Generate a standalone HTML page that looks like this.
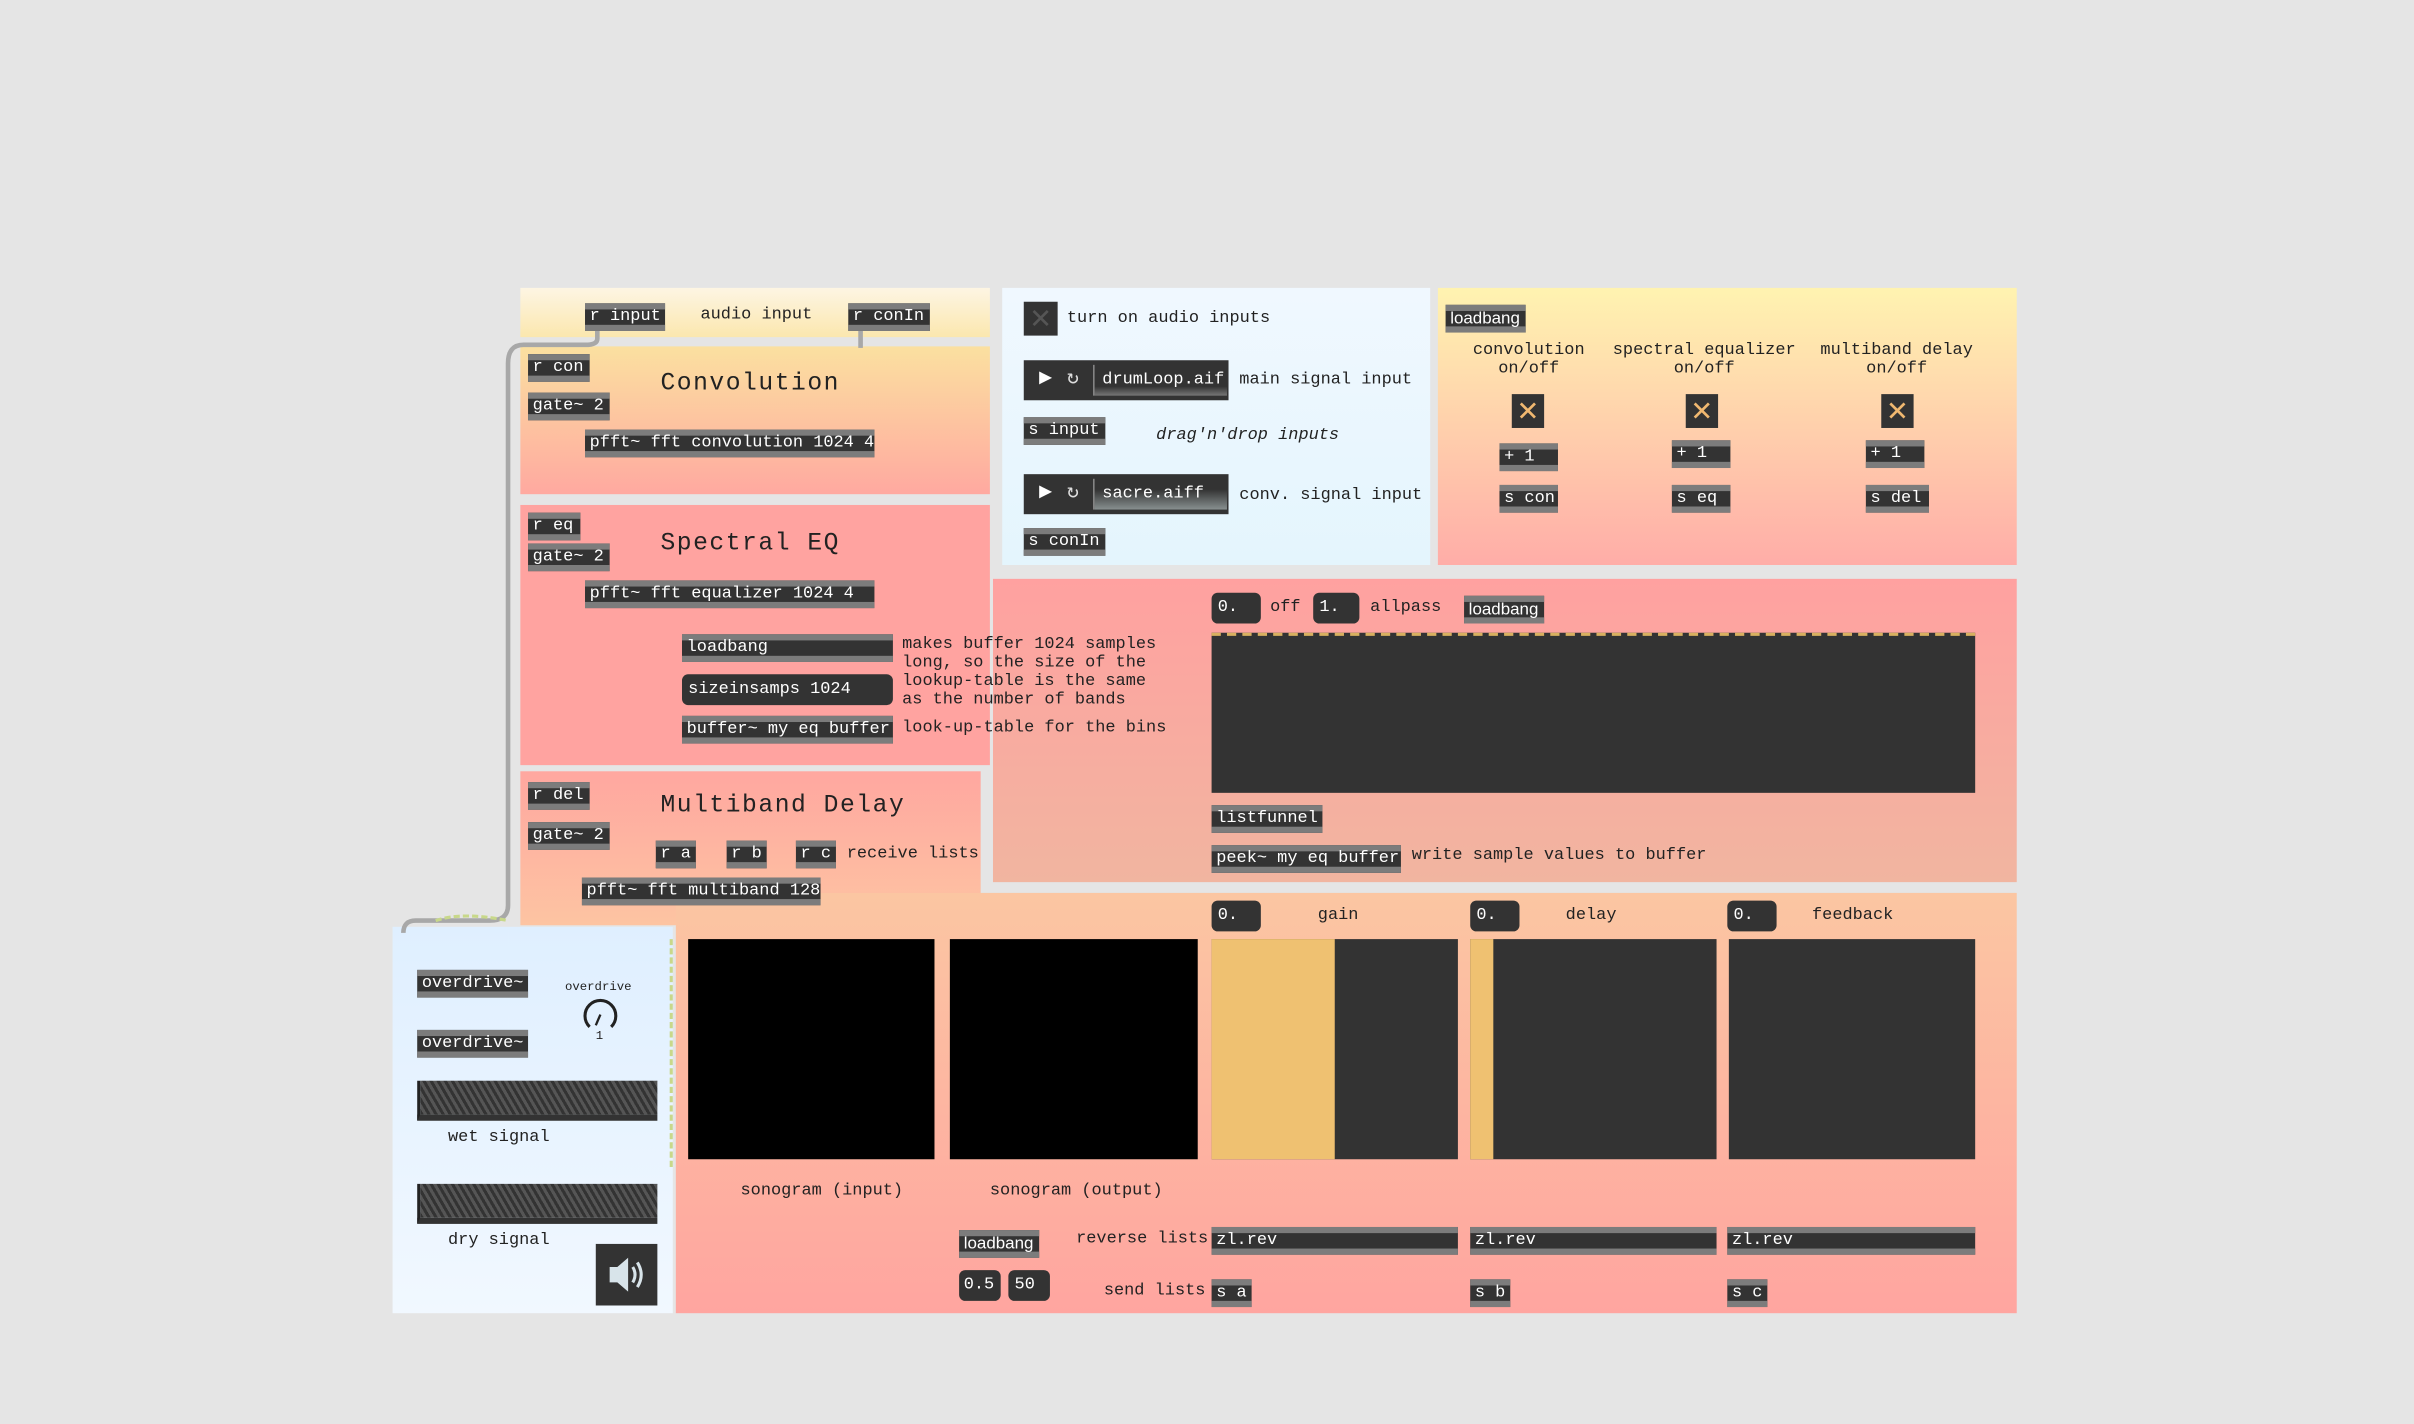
<!DOCTYPE html>
<html><head><meta charset="utf-8"><style>
html,body{margin:0;padding:0;background:#e5e5e5;overflow:hidden}
#w{position:absolute;left:0;top:0;width:1568px;height:925px;transform:scale(1.5395);transform-origin:0 0;font-family:"Liberation Mono",monospace;font-size:11px;color:#222}
.p{position:absolute}
.o{position:absolute;background:#333;color:#fff;border-top:4px solid #7c7c7c;border-bottom:4px solid #7c7c7c;height:10px;line-height:10px;padding:0 3px;box-sizing:content-box;white-space:nowrap;font-size:11px}
.m{position:absolute;background:#333;color:#fff;border-radius:4px;height:20px;line-height:20px;padding:0 4px;white-space:nowrap;box-sizing:border-box}
.t{position:absolute;white-space:nowrap;line-height:12px}
.tg{position:absolute;background:#333;color:#f0b870;font-size:18px;text-align:center;font-family:"Liberation Sans",sans-serif}
.h{position:absolute;font-size:16px;letter-spacing:1px;white-space:nowrap}
.bk{position:absolute;background:#000}
.dk{position:absolute;background:#333}
</style></head><body><div id="w">
<!-- panels -->
<div class="p" style="left:338px;top:187px;width:305px;height:32px;background:linear-gradient(#fdf5e3,#fbe7ae)"></div>
<div class="p" style="left:338px;top:225px;width:305px;height:96px;background:linear-gradient(#fbe0a0,#ffa9a0)"></div>
<div class="p" style="left:338px;top:328px;width:305px;height:169px;background:#ffa3a0"></div>
<div class="p" style="left:338px;top:501px;width:299px;height:100px;background:linear-gradient(#ffa7a0,#fdc4a2)"></div>
<div class="p" style="left:651px;top:187px;width:278px;height:180px;background:linear-gradient(#f0f8ff,#e4f5fd)"></div>
<div class="p" style="left:934px;top:187px;width:376px;height:180px;background:linear-gradient(#fff3b0,#ffada8)"></div>
<div class="p" style="left:645px;top:376px;width:665px;height:197px;background:linear-gradient(#ffa1a0,#f1b5a0)"></div>
<div class="p" style="left:439px;top:580px;width:871px;height:273px;background:linear-gradient(#fbc6a2,#ffa5a0)"></div>
<div class="p" style="left:255px;top:602px;width:182px;height:251px;background:linear-gradient(#dfefff,#f1f8ff)"></div>
<!-- cords -->
<svg class="p" style="left:0;top:0" width="1568" height="925">
<path d="M388 214 L388 220 Q388 224 380 224 L340 224 Q330 224 330 236 L330 588 Q330 598 318 598 L270 598 Q262 598 262 606" fill="none" stroke="#a8a8a8" stroke-width="3"/>
<path d="M559 214 L559 226" stroke="#a8a8a8" stroke-width="3"/>
<path d="M436 610 Q436 640 436 700 Q436 730 436 760" fill="none" stroke="#c8d88a" stroke-width="2" stroke-dasharray="4 2"/>
<path d="M283 598 Q300 592 330 598" fill="none" stroke="#c8d88a" stroke-width="2" stroke-dasharray="4 2"/>
</svg>
<!-- top-left -->
<div class="o" style="left:380px;top:197px;width:46px">r input</div>
<div class="t" style="left:455px;top:199px">audio input</div>
<div class="o" style="left:551px;top:197px;width:47px">r conIn</div>
<div class="o" style="left:343px;top:230px;width:34px">r con</div>
<div class="o" style="left:343px;top:255px;width:47px">gate~ 2</div>
<div class="h" style="left:429px;top:240px">Convolution</div>
<div class="o" style="left:380px;top:279px;width:182px">pfft~ fft convolution 1024 4</div>
<div class="o" style="left:343px;top:333px;width:28px">r eq</div>
<div class="o" style="left:343px;top:353px;width:47px">gate~ 2</div>
<div class="h" style="left:429px;top:344px">Spectral EQ</div>
<div class="o" style="left:380px;top:377px;width:182px">pfft~ fft equalizer 1024 4</div>
<div class="o" style="left:443px;top:412px;width:131px">loadbang</div>
<div class="m" style="left:443px;top:438px;width:137px">sizeinsamps 1024</div>
<div class="o" style="left:443px;top:465px;width:131px">buffer~ my eq buffer</div>
<div class="t" style="left:586px;top:413px">makes buffer 1024 samples<br>long, so the size of the<br>lookup-table is the same<br>as the number of bands</div>
<div class="t" style="left:586px;top:467px">look-up-table for the bins</div>
<div class="o" style="left:343px;top:508px;width:34px">r del</div>
<div class="o" style="left:343px;top:534px;width:47px">gate~ 2</div>
<div class="h" style="left:429px;top:514px">Multiband Delay</div>
<div class="o" style="left:426px;top:546px;width:20px">r a</div>
<div class="o" style="left:472px;top:546px;width:20px">r b</div>
<div class="o" style="left:517px;top:546px;width:20px">r c</div>
<div class="t" style="left:550px;top:549px">receive lists</div>
<div class="o" style="left:378px;top:570px;width:149px">pfft~ fft multiband 128</div>
<!-- middle blue -->
<div class="tg" style="left:665px;top:196px;width:22px;height:22px;line-height:22px;color:#555">✕</div>
<div class="t" style="left:693px;top:201px">turn on audio inputs</div>
<div class="dk" style="left:665px;top:234px;width:133px;height:26px"><span style="position:absolute;left:10px;top:3px;color:#fff;font-size:14px">▶</span><span style="position:absolute;left:28px;top:4px;color:#ddd;font-size:13px">↻</span><div style="position:absolute;left:45px;top:3px;width:86px;height:20px;border-left:1px solid #888;background:linear-gradient(transparent 70%,#777 100%)"></div><span style="position:absolute;left:51px;top:7px;color:#fff">drumLoop.aif</span></div>
<div class="t" style="left:805px;top:241px">main signal input</div>
<div class="o" style="left:665px;top:271px;width:47px">s input</div>
<div class="t" style="left:751px;top:277px;font-style:italic">drag'n'drop inputs</div>
<div class="dk" style="left:665px;top:308px;width:133px;height:26px"><span style="position:absolute;left:10px;top:3px;color:#fff;font-size:14px">▶</span><span style="position:absolute;left:28px;top:4px;color:#ddd;font-size:13px">↻</span><div style="position:absolute;left:45px;top:3px;width:86px;height:20px;border-left:1px solid #888;background:linear-gradient(transparent 35%,#889090 100%)"></div><span style="position:absolute;left:51px;top:7px;color:#fff">sacre.aiff</span></div>
<div class="t" style="left:805px;top:316px">conv. signal input</div>
<div class="o" style="left:665px;top:343px;width:47px">s conIn</div>
<!-- right panel -->
<div class="o" style="left:939px;top:198px;width:46px;font-family:'Liberation Sans',sans-serif">loadbang</div>
<div class="t" style="left:943px;top:222px;width:100px;text-align:center">convolution<br>on/off</div>
<div class="t" style="left:1045px;top:222px;width:124px;text-align:center">spectral equalizer<br>on/off</div>
<div class="t" style="left:1176px;top:222px;width:112px;text-align:center">multiband delay<br>on/off</div>
<div class="tg" style="left:982px;top:256px;width:21px;height:22px;line-height:22px">✕</div>
<div class="tg" style="left:1095px;top:256px;width:21px;height:22px;line-height:22px">✕</div>
<div class="tg" style="left:1222px;top:256px;width:21px;height:22px;line-height:22px">✕</div>
<div class="o" style="left:974px;top:288px;width:32px">+ 1</div>
<div class="o" style="left:1086px;top:286px;width:32px">+ 1</div>
<div class="o" style="left:1212px;top:286px;width:32px">+ 1</div>
<div class="o" style="left:974px;top:315px;width:32px">s con</div>
<div class="o" style="left:1086px;top:315px;width:32px">s eq</div>
<div class="o" style="left:1212px;top:315px;width:35px">s del</div>
<!-- big pink -->
<div class="m" style="left:787px;top:385px;width:32px">0.</div>
<div class="t" style="left:825px;top:389px">off</div>
<div class="m" style="left:853px;top:385px;width:30px">1.</div>
<div class="t" style="left:890px;top:389px">allpass</div>
<div class="o" style="left:951px;top:387px;width:46px;font-family:'Liberation Sans',sans-serif">loadbang</div>
<div class="dk" style="left:787px;top:411px;width:496px;height:104px;border-top:2px dashed #d8b060;box-sizing:border-box"></div>
<div class="o" style="left:787px;top:523px;width:66px">listfunnel</div>
<div class="o" style="left:787px;top:549px;width:117px">peek~ my eq buffer</div>
<div class="t" style="left:917px;top:550px">write sample values to buffer</div>
<!-- bottom -->
<div class="m" style="left:787px;top:585px;width:32px">0.</div>
<div class="t" style="left:856px;top:589px">gain</div>
<div class="m" style="left:955px;top:585px;width:32px">0.</div>
<div class="t" style="left:1017px;top:589px">delay</div>
<div class="m" style="left:1122px;top:585px;width:32px">0.</div>
<div class="t" style="left:1177px;top:589px">feedback</div>
<div class="bk" style="left:447px;top:610px;width:160px;height:143px"></div>
<div class="bk" style="left:617px;top:610px;width:161px;height:143px"></div>
<div class="dk" style="left:787px;top:610px;width:160px;height:143px"><div style="position:absolute;left:0;top:0;width:80px;height:143px;background:#efc171"></div></div>
<div class="dk" style="left:955px;top:610px;width:160px;height:143px"><div style="position:absolute;left:0;top:0;width:15px;height:143px;background:#efc171"></div></div>
<div class="dk" style="left:1123px;top:610px;width:160px;height:143px"></div>
<div class="t" style="left:481px;top:768px">sonogram (input)</div>
<div class="t" style="left:643px;top:768px">sonogram (output)</div>
<div class="o" style="left:623px;top:799px;width:46px;font-family:'Liberation Sans',sans-serif">loadbang</div>
<div class="t" style="left:699px;top:799px">reverse lists</div>
<div class="o" style="left:787px;top:797px;width:154px">zl.rev</div>
<div class="o" style="left:955px;top:797px;width:154px">zl.rev</div>
<div class="o" style="left:1122px;top:797px;width:155px">zl.rev</div>
<div class="m" style="left:623px;top:825px;width:27px;padding:0 3px">0.5</div>
<div class="m" style="left:655px;top:825px;width:27px">50</div>
<div class="t" style="left:717px;top:833px">send lists</div>
<div class="o" style="left:787px;top:831px;width:20px">s a</div>
<div class="o" style="left:955px;top:831px;width:20px">s b</div>
<div class="o" style="left:1122px;top:831px;width:20px">s c</div>
<!-- left blue -->
<div class="o" style="left:271px;top:630px;width:66px">overdrive~</div>
<div class="o" style="left:271px;top:669px;width:66px">overdrive~</div>
<div class="t" style="left:367px;top:636px;font-size:8px">overdrive</div>
<svg class="p" style="left:377px;top:646px" width="26" height="26"><path d="M6 21 A10 10 0 1 1 20 21" fill="none" stroke="#222" stroke-width="2"/><path d="M13 13 L10 20" stroke="#222" stroke-width="1.5"/></svg>
<div class="t" style="left:387px;top:668px;font-size:8px">1</div>
<div class="p" style="left:271px;top:702px;width:156px;height:26px;background:repeating-linear-gradient(60deg,#333 0 2px,#555 2px 4px);border-left:2px solid #222;border-bottom:4px solid #333;box-sizing:border-box"></div>
<div class="t" style="left:291px;top:733px">wet signal</div>
<div class="p" style="left:271px;top:769px;width:156px;height:26px;background:repeating-linear-gradient(60deg,#333 0 2px,#555 2px 4px);border-left:2px solid #222;border-bottom:4px solid #333;box-sizing:border-box"></div>
<div class="t" style="left:291px;top:800px">dry signal</div>
<div class="dk" style="left:387px;top:808px;width:40px;height:40px"><svg width="40" height="40"><path d="M9 15 L14 15 L21 9 L21 31 L14 25 L9 25 Z" fill="#d8e4ea"/><path d="M24 15 Q27 20 24 25 M27 12 Q32 20 27 28" fill="none" stroke="#d8e4ea" stroke-width="2"/></svg></div>
</div></body></html>
